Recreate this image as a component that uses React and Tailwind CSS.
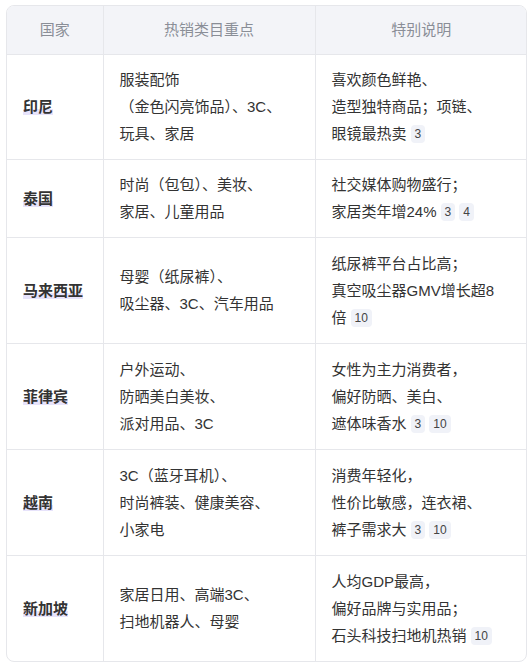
import React from "react";

const B = ({ n }) => (
  <span className="ml-1 inline-flex h-[18px] items-center rounded-[4px] bg-[#f0f2f8] px-[4px] align-[1px] text-[12px] leading-none text-[#444]">
    {n}
  </span>
);

const rows = [
  {
    c: "印尼",
    a: ["服装配饰", "（金色闪亮饰品）、3C、", "玩具、家居"],
    b: [["喜欢颜色鲜艳、"], ["造型独特商品；项链、"], ["眼镜最热卖", ["3"]]],
  },
  {
    c: "泰国",
    a: ["时尚（包包）、美妆、", "家居、儿童用品"],
    b: [["社交媒体购物盛行；"], ["家居类年增24%", ["3", "4"]]],
  },
  {
    c: "马来西亚",
    a: ["母婴（纸尿裤）、", "吸尘器、3C、汽车用品"],
    b: [["纸尿裤平台占比高；"], ["真空吸尘器GMV增长超8"], ["倍", ["10"]]],
  },
  {
    c: "菲律宾",
    a: ["户外运动、", "防晒美白美妆、", "派对用品、3C"],
    b: [["女性为主力消费者，"], ["偏好防晒、美白、"], ["遮体味香水", ["3", "10"]]],
  },
  {
    c: "越南",
    a: ["3C（蓝牙耳机）、", "时尚裤装、健康美容、", "小家电"],
    b: [["消费年轻化，"], ["性价比敏感，连衣裙、"], ["裤子需求大", ["3", "10"]]],
  },
  {
    c: "新加坡",
    a: ["家居日用、高端3C、", "扫地机器人、母婴"],
    b: [["人均GDP最高，"], ["偏好品牌与实用品；"], ["石头科技扫地机热销", ["10"]]],
  },
];

const heights = ["h-[105px]", "h-[78px]", "h-[106px]", "h-[106px]", "h-[106px]", "h-[106px]"];

export default function App() {
  return (
    <div className="min-h-[667px] w-[532px] bg-white pl-[6px] pt-[5px] font-['Liberation_Sans','Noto_Sans_CJK_SC',sans-serif] text-[15px] text-[#333]">
      <div className="w-[521px] overflow-hidden rounded-[8px] border border-[#e6e7eb]">
        <table className="w-full table-fixed border-collapse">
          <colgroup>
            <col className="w-[96px]" />
            <col className="w-[212px]" />
            <col className="w-[212px]" />
          </colgroup>
          <thead>
            <tr className="h-[48px] bg-[#f3f4f8] text-[#8a8e97]">
              <th className="text-center font-normal">国家</th>
              <th className="border-l border-[#e6e7eb] text-center font-normal">热销类目重点</th>
              <th className="border-l border-[#e6e7eb] text-center font-normal">特别说明</th>
            </tr>
          </thead>
          <tbody>
            {rows.map((r, i) => (
              <tr key={i} className={`${heights[i]} border-t border-[#e6e7eb] leading-[27px]`}>
                <td className="pl-[16px] align-middle">
                  <span className="bg-[linear-gradient(transparent_62%,#e7e3fb_62%)] font-bold">{r.c}</span>
                </td>
                <td className="border-l border-[#e6e7eb] pl-[16px] align-middle">
                  {r.a.map((l, j) => (
                    <div key={j} className="whitespace-nowrap">{l}</div>
                  ))}
                </td>
                <td className="border-l border-[#e6e7eb] pl-[16px] align-middle">
                  {r.b.map((l, j) => (
                    <div key={j} className="whitespace-nowrap">
                      {l[0]}
                      {l[1] && l[1].map((n, k) => <B key={k} n={n} />)}
                    </div>
                  ))}
                </td>
              </tr>
            ))}
          </tbody>
        </table>
      </div>
    </div>
  );
}
